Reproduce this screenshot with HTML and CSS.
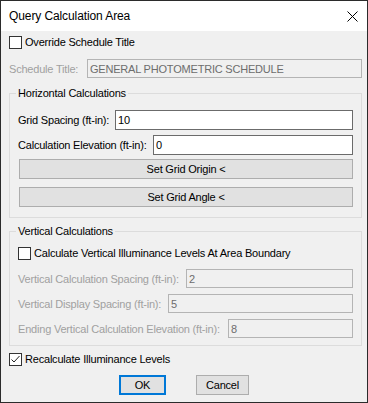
FILE: index.html
```html
<!DOCTYPE html>
<html lang="en">
<head>
    <meta charset="UTF-8">
    <meta name="viewport" content="width=device-width, initial-scale=1.0">
    <title>Query Calculation Area</title>
    <link rel="stylesheet" href="styles.css">
</head>
<body>

    <div class="window">
        <!-- Title Bar -->
        <div class="titlebar">
            <span class="title">Query Calculation Area</span>
            <svg class="close" width="11" height="11" viewBox="0 0 11 11">
                <path d="M0.5 0.5L10.5 10.5M10.5 0.5L0.5 10.5" stroke="#000" stroke-width="1" fill="none"/>
            </svg>
        </div>

        <div class="content">
            <div class="check-row">
                <span class="box"></span>
                <span>Override Schedule Title</span>
            </div>

            <div class="field-row schedule disabled">
                <span>Schedule Title:</span>
                <input class="text w-title" value="GENERAL PHOTOMETRIC SCHEDULE" disabled>
            </div>

            <!-- Horizontal -->
            <div class="group group-h">
                <div class="group-title">Horizontal Calculations</div>
                <div class="field-row tall first">
                    <span>Grid Spacing (ft-in):</span>
                    <input class="text w-grid" value="10">
                </div>
                <div class="field-row tall second">
                    <span>Calculation Elevation (ft-in):</span>
                    <input class="text w-elev" value="0">
                </div>
                <button class="btn wide origin">Set Grid Origin &lt;</button>
                <button class="btn wide angle">Set Grid Angle &lt;</button>
            </div>

            <!-- Vertical -->
            <div class="group group-v">
                <div class="group-title">Vertical Calculations</div>
                <div class="check-row vcheck">
                    <span class="box"></span>
                    <span>Calculate Vertical Illuminance Levels At Area Boundary</span>
                </div>
                <div class="field-row disabled v1">
                    <span>Vertical Calculation Spacing (ft-in):</span>
                    <input class="text w-vcalc" value="2" disabled>
                </div>
                <div class="field-row disabled v2">
                    <span>Vertical Display Spacing (ft-in):</span>
                    <input class="text w-vdisp" value="5" disabled>
                </div>
                <div class="field-row disabled v2">
                    <span>Ending Vertical Calculation Elevation (ft-in):</span>
                    <input class="text w-vend" value="8" disabled>
                </div>
            </div>

            <div class="check-row recalc">
                <span class="box">
                    <svg width="11" height="11" viewBox="0 0 11 11">
                        <path d="M1.5 5.5L4 8L9.5 2" stroke="#222" stroke-width="1" fill="none"/>
                    </svg>
                </span>
                <span>Recalculate Illuminance Levels</span>
            </div>

            <div class="actions">
                <button class="btn ok">OK</button>
                <button class="btn cancel">Cancel</button>
            </div>
        </div>
    </div>

</body>
</html>
```

FILE: styles.css
```css
/* General */
body { margin: 0; padding: 0; background: #fff; }
.window { width: 368px; height: 403px; box-sizing: border-box; border: 1px solid #2b2b2b; background: #f0f0f0;
          font-family: "Liberation Sans", Arial, sans-serif; font-size: 11px; letter-spacing: -0.2px; color: #000; }

/* Title bar */
.titlebar { height: 30px; background: #fff; display: flex; align-items: center; justify-content: space-between;
            padding: 0 9px 0 8px; }
.title { font-size: 12px; letter-spacing: -0.1px; }
.close { display: block; }

/* Content */
.content { padding: 5px 5px 0 8px; }

.check-row { display: flex; align-items: center; gap: 3px; height: 13px; line-height: 13px; }
.box { width: 13px; height: 13px; box-sizing: border-box; border: 1px solid #333; background: #fff;
       display: flex; align-items: center; justify-content: center; flex: none; }
.box svg { display: block; }

.field-row { display: flex; align-items: center; justify-content: space-between; height: 19px; }
.field-row.tall { height: 20px; }
.disabled { color: #a0a0a0; }

.text { box-sizing: border-box; height: 100%; padding: 0 2px; margin: 0; border: 1px solid #6b6b6b; background: #fff;
        font: inherit; letter-spacing: inherit; color: #000; outline: none; }
.text:disabled { border-color: #b4b4b4; background: #f0f0f0; color: #6d6d6d; }

.w-title { width: 275px; }
.w-grid { width: 238px; }
.w-elev { width: 200px; }
.w-vcalc { width: 167px; }
.w-vdisp { width: 185px; }
.w-vend { width: 125px; }

.schedule { margin-top: 10px; }

/* Group boxes */
.group { border: 1px solid #dcdcdc; padding: 0 8px; }
.group-title { width: fit-content; margin: -7px 0 0 -2px; padding: 0 2px; background: #f0f0f0; line-height: 13px; }
.group-h { margin-top: 15px; padding-bottom: 10px; }
.group-h .first { margin-top: 10px; }
.group-h .second { margin-top: 5px; }
.group-v { margin-top: 13px; padding-bottom: 7px; }
.vcheck { margin-top: 9px; }
.v1 { margin-top: 9px; }
.v2 { margin-top: 6px; }

/* Buttons */
.btn { display: block; box-sizing: border-box; height: 20px; margin: 0; padding: 0; background: #e1e1e1;
       border: 1px solid #adadad; font: inherit; letter-spacing: inherit; color: #000; }
.wide { width: 334px; margin-left: 1px; }
.origin { margin-top: 4px; }
.angle { margin-top: 8px; }

.recalc { margin-top: 7px; }
.actions { display: flex; justify-content: center; gap: 30px; margin-top: 9px; padding-right: 3px; }
.ok { width: 47px; border: 2px solid #0078d7; }
.cancel { width: 53px; }
```
